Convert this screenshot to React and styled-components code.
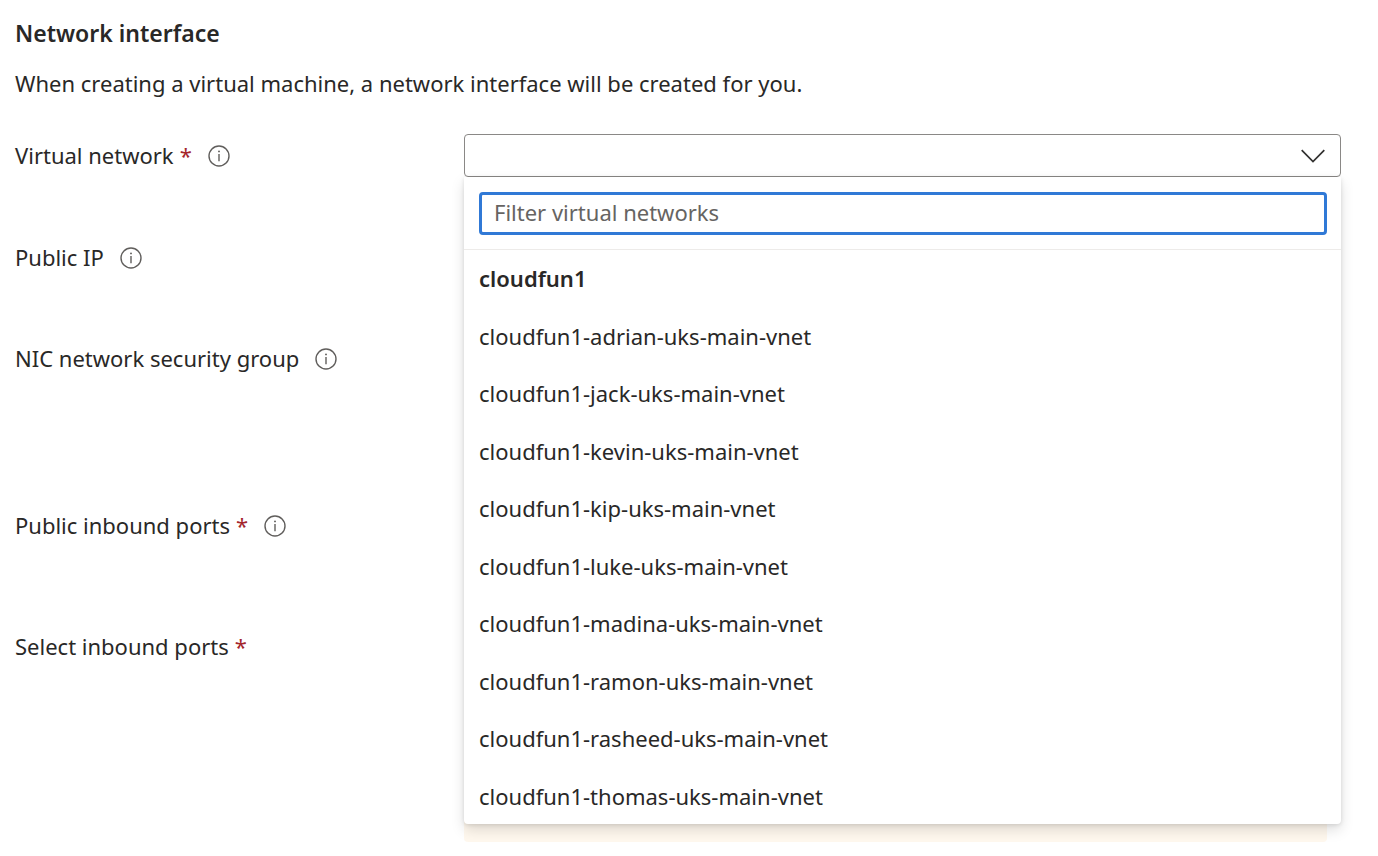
import React from 'react';
import styled, { createGlobalStyle } from 'styled-components';

const GlobalStyle = createGlobalStyle`
  * { box-sizing: border-box; }
  body {
    margin: 0;
    background: #ffffff;
    color: #292827;
    font-family: "Segoe UI", "Noto Sans", "Open Sans", sans-serif;
    font-size: 22px;
    line-height: 32px;
  }
`;

const Page = styled.main`
  padding: 17px 37px 14px 15px;
`;

const Title = styled.h2`
  margin: 0 0 18px;
  font-size: 23px;
  font-weight: 600;
  line-height: 32px;
`;

const Intro = styled.p`
  margin: 0 0 35px;
`;

const Field = styled.div`
  display: grid;
  grid-template-columns: 449px 1fr;
  min-height: ${(p) => p.$height}px;
`;

const LabelCell = styled.div`
  display: flex;
  align-items: center;
  height: 43px;
`;

const LabelText = styled.label`
  padding-bottom: 2px;
`;

const Required = styled.span`
  margin-left: 6px;
  color: #a4262c;
`;

const InfoButton = styled.button`
  display: flex;
  margin: 0 0 0 16px;
  padding: 0;
  border: 0;
  background: none;
  color: #605e5c;
`;

const Control = styled.div`
  position: relative;
`;

const Select = styled.select`
  display: block;
  width: 100%;
  height: 43px;
  padding: 0 48px 0 14px;
  appearance: none;
  border: 1px solid #8a8886;
  border-radius: 4px;
  background: #ffffff;
  color: inherit;
  font: inherit;
`;

const Chevron = styled.svg`
  position: absolute;
  top: 15px;
  right: 16px;
  pointer-events: none;
`;

const Menu = styled.div`
  position: absolute;
  z-index: 1;
  top: 43px;
  left: 0;
  right: 0;
  border-radius: 0 0 4px 4px;
  background: #ffffff;
  box-shadow: 0 6px 14px rgba(0, 0, 0, 0.13), 0 1px 4px rgba(0, 0, 0, 0.11);
`;

const FilterBar = styled.div`
  padding: 15px 14px 14px 15px;
  border-bottom: 1px solid #edebe9;
`;

const FilterInput = styled.input`
  display: block;
  width: 100%;
  height: 43px;
  padding: 0 12px 4px;
  border: 3px solid #3079d6;
  border-radius: 4px;
  outline: 0;
  background: #ffffff;
  color: inherit;
  font: inherit;
  &::placeholder { color: #666462; opacity: 1; }
`;

const Options = styled.ul`
  display: flex;
  flex-direction: column;
  justify-content: space-between;
  height: 574px;
  margin: 0;
  padding: 7px 15px;
  list-style: none;
`;

const Option = styled.li`
  line-height: 42px;
  font-weight: ${(p) => (p.$group ? 600 : 400)};
`;

const Notice = styled.div`
  height: 217px;
  margin-right: 14px;
  border-radius: 4px;
  background: #fff8ee;
`;

const networks = ['adrian', 'jack', 'kevin', 'kip', 'luke', 'madina', 'ramon', 'rasheed', 'thomas'];

function Label({ text, required, info = true, htmlFor }) {
  return (
    <LabelCell>
      <LabelText htmlFor={htmlFor}>
        {text}
        {required && <Required>*</Required>}
      </LabelText>
      {info && (
        <InfoButton type="button" aria-label={`About ${text}`}>
          <svg width="22" height="22" viewBox="0 0 22 22" fill="none" aria-hidden="true">
            <circle cx="11" cy="11" r="10" stroke="currentColor" strokeWidth="1.4" />
            <path d="M11 9v7.2" stroke="currentColor" strokeWidth="1.4" />
            <circle cx="11" cy="6.4" r="0.95" fill="currentColor" />
          </svg>
        </InfoButton>
      )}
    </LabelCell>
  );
}

export default function App() {
  return (
    <Page>
      <GlobalStyle />
      <Title>Network interface</Title>
      <Intro>When creating a virtual machine, a network interface will be created for you.</Intro>
      <Field $height={102}>
        <Label text="Virtual network" required htmlFor="vnet" />
        <Control>
          <Select id="vnet" defaultValue="">
            <option value="" />
          </Select>
          <Chevron width="24" height="14" viewBox="0 0 24 14" fill="none" aria-hidden="true">
            <path d="M0.7 1.2L12 12.5L23.3 1.2" stroke="#323130" strokeWidth="1.7" />
          </Chevron>
          <Menu>
            <FilterBar>
              <FilterInput type="text" placeholder="Filter virtual networks" aria-label="Filter virtual networks" />
            </FilterBar>
            <Options>
              <Option $group>cloudfun1</Option>
              {networks.map((name) => (
                <Option key={name}>{`cloudfun1-${name}-uks-main-vnet`}</Option>
              ))}
            </Options>
          </Menu>
        </Control>
      </Field>
      <Field $height={101}>
        <Label text="Public IP" />
      </Field>
      <Field $height={167}>
        <Label text="NIC network security group" />
      </Field>
      <Field $height={121}>
        <Label text="Public inbound ports" required />
      </Field>
      <Field $height={217}>
        <Label text="Select inbound ports" required info={false} />
        <Notice />
      </Field>
    </Page>
  );
}
